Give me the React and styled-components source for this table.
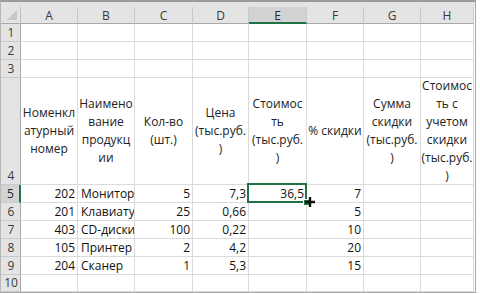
import React from 'react';
import styled, { createGlobalStyle, css } from 'styled-components';

const Global = createGlobalStyle`
	html, body {
		margin: 0;
		padding: 0;
		background: #fff;
	}
`;

const Page = styled.div`
	width: 480px;
	height: 294px;
	overflow: hidden;
	background: #fff;
`;

const Frame = styled.div`
	width: 474px;
	border-top: 2px solid #9b9b9b;
	border-left: 1px solid #b8b8b8;
	border-right: 1px solid #a8a8a8;
	border-bottom: 1px solid #a8a8a8;
	background: #fff;
	overflow: hidden;
`;

const TopBand = styled.div`
	height: 5px;
	background: #e4e4e4;
`;

const Sheet = styled.div`
	display: grid;
	grid-template-columns: 20px 57px 57px 58px 56px 58px 57px 57px 53px;
	grid-template-rows: 17px 18px 18px 18px 107px 18px 18px 18px 18px 18px 17px;
	font-family: 'Open Sans', 'Liberation Sans', sans-serif;
`;

const Corner = styled.div`
	position: relative;
	background: #e4e4e4;
	border-right: 1px solid #bdbdbd;
	border-bottom: 1px solid #a9a9a9;
	box-sizing: border-box;

	&::after {
		content: '';
		position: absolute;
		right: 3px;
		bottom: 3px;
		width: 0;
		height: 0;
		border-left: 10px solid transparent;
		border-bottom: 10px solid #c6c6c6;
	}
`;

const ColHead = styled.div`
	background: ${ ( p ) => ( p.active ? '#d3d3d3' : '#e4e4e4' ) };
	color: ${ ( p ) => ( p.active ? '#262626' : '#3a3a3a' ) };
	border-right: 1px solid #c9c9c9;
	border-bottom: ${ ( p ) => ( p.active ? '2px solid #217346' : '1px solid #a9a9a9' ) };
	box-sizing: border-box;
	display: flex;
	align-items: center;
	justify-content: center;
	font-size: 12px;
	padding-top: ${ ( p ) => ( p.active ? '1px' : '0' ) };
`;

const RowHead = styled.div`
	background: ${ ( p ) => ( p.active ? '#d3d3d3' : '#e4e4e4' ) };
	color: ${ ( p ) => ( p.active ? '#262626' : '#3a3a3a' ) };
	border-right: ${ ( p ) => ( p.active ? '2px solid #217346' : '1px solid #a9a9a9' ) };
	border-bottom: 1px solid #c9c9c9;
	box-sizing: border-box;
	display: flex;
	align-items: flex-end;
	justify-content: center;
	font-size: 12px;
	line-height: 17px;
	padding-left: 1px;
`;

const Cell = styled.div`
	position: relative;
	border-right: 1px solid #dadada;
	border-bottom: 1px solid #dadada;
	box-sizing: border-box;
	font-size: 12px;
	line-height: 17px;
	color: #111;
	white-space: nowrap;
	overflow: ${ ( p ) => ( p.selected ? 'visible' : 'hidden' ) };
	text-align: ${ ( p ) => p.align || 'left' };
	padding: 0 ${ ( p ) => ( p.align === 'right' ? '2px' : '2px 0 3px' ) };
	${ ( p ) =>
		p.wrap &&
		css`
			display: flex;
			flex-direction: column;
			justify-content: center;
			align-items: center;
			line-height: 18px;
			padding: 0;
			overflow: visible;
			color: #222;
		` }
	${ ( p ) =>
		p.selected &&
		css`
			z-index: 2;
			&::after {
				content: '';
				position: absolute;
				left: -2px;
				top: -2px;
				right: -1px;
				bottom: -1px;
				border: 2px solid #217346;
			}
		` }
`;

const Handle = styled.span`
	position: absolute;
	right: -4px;
	bottom: -4px;
	width: 5px;
	height: 5px;
	background: #217346;
	border: 1px solid #fff;
	z-index: 3;
`;

const Cursor = styled.svg`
	position: absolute;
	left: 55px;
	top: 11px;
	z-index: 4;
`;

const cols = [ 'A', 'B', 'C', 'D', 'E', 'F', 'G', 'H' ];

const titles = [
	[ 'Номенкл', 'атурный', 'номер' ],
	[ 'Наимено', 'вание', 'продукц', 'ии' ],
	[ 'Кол-во', '(шт.)' ],
	[ 'Цена', '(тыс.руб.', ')' ],
	[ 'Стоимос', 'ть', '(тыс.руб.', ')' ],
	[ '% скидки' ],
	[ 'Сумма', 'скидки', '(тыс.руб.', ')' ],
	[ 'Стоимос', 'ть с', 'учетом', 'скидки', '(тыс.руб.', ')' ],
];

const data = [
	[ '202', 'Монитор', '5', '7,3', '36,5', '7' ],
	[ '201', 'Клавиатура', '25', '0,66', '', '5' ],
	[ '403', 'CD-диски', '100', '0,22', '', '10' ],
	[ '105', 'Принтер', '2', '4,2', '', '20' ],
	[ '204', 'Сканер', '1', '5,3', '', '15' ],
];

const emptyRow = ( n ) => (
	<React.Fragment key={ n }>
		<RowHead>{ n }</RowHead>
		{ cols.map( ( c ) => (
			<Cell key={ c } />
		) ) }
	</React.Fragment>
);

export default function App() {
	return (
		<Page>
			<Global />
			<Frame>
				<TopBand />
				<Sheet>
					<Corner />
					{ cols.map( ( c ) => (
						<ColHead key={ c } active={ c === 'E' }>
							{ c }
						</ColHead>
					) ) }

					{ [ 1, 2, 3 ].map( emptyRow ) }

					<RowHead>4</RowHead>
					{ titles.map( ( lines, i ) => (
						<Cell key={ i } wrap>
							{ lines.map( ( l, j ) => (
								<span key={ j }>{ l }</span>
							) ) }
						</Cell>
					) ) }

					{ data.map( ( row, r ) => (
						<React.Fragment key={ r }>
							<RowHead active={ r === 0 }>{ r + 5 }</RowHead>
							{ cols.map( ( c, i ) => {
								const v = row[ i ] || '';
								const isText = i === 1;
								const sel = r === 0 && i === 4;
								return (
									<Cell
										key={ c }
										align={ isText ? 'left' : 'right' }
										selected={ sel }
									>
										{ v }
										{ sel && <Handle /> }
										{ sel && (
											<Cursor width="12" height="12" viewBox="0 0 12 12">
												<path d="M6 1v10M1 6h10" stroke="#111" strokeWidth="2.4" />
											</Cursor>
										) }
									</Cell>
								);
							} ) }
						</React.Fragment>
					) ) }

					{ emptyRow( 10 ) }
				</Sheet>
			</Frame>
		</Page>
	);
}
